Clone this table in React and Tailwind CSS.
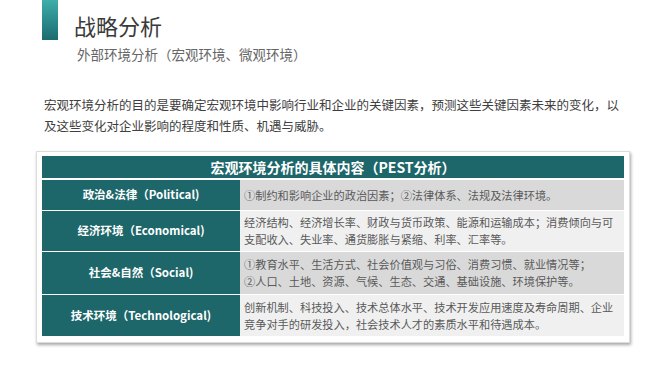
const rows = [
  {
    label: "政治&法律（Political)",
    lines: ["①制约和影响企业的政治因素；②法律体系、法规及法律环境。"],
    h: "h-[30px]",
    bg: "bg-[#d9d9d9]",
  },
  {
    label: "经济环境（Economical)",
    lines: [
      "经济结构、经济增长率、财政与货币政策、能源和运输成本；消费倾向与可",
      "支配收入、失业率、通货膨胀与紧缩、利率、汇率等。",
    ],
    h: "h-[40px]",
    bg: "bg-[#f0f0f0]",
  },
  {
    label: "社会&自然（Social)",
    lines: [
      "①教育水平、生活方式、社会价值观与习俗、消费习惯、就业情况等；",
      "②人口、土地、资源、气候、生态、交通、基础设施、环境保护等。",
    ],
    h: "h-[42px]",
    bg: "bg-[#d9d9d9]",
  },
  {
    label: "技术环境（Technological)",
    lines: [
      "创新机制、科技投入、技术总体水平、技术开发应用速度及寿命周期、企业",
      "竞争对手的研发投入，社会技术人才的素质水平和待遇成本。",
    ],
    h: "h-[41px]",
    bg: "bg-[#f0f0f0]",
  },
];

const App = () => {
  return (
    <div
      className="w-[668px] h-[376px] bg-white overflow-hidden"
      style={{ fontFamily: '"Noto Sans CJK SC", "Noto Sans", sans-serif' }}
    >
      {/* 标题 */}
      <div className="flex items-start pl-[42px]">
        <div className="w-[16px] h-[40px] bg-gradient-to-b from-[#3eaeab] to-[#1c6b6f]"></div>
        <div className="ml-[16px] mt-[11px] text-[22px] leading-[28px] text-[#3a3a3a]">
          战略分析
        </div>
      </div>
      <div className="pl-[77px] mt-[5px] text-[13.5px] leading-[18px] text-[#666666]">
        外部环境分析（宏观环境、微观环境）
      </div>

      {/* 说明文字 */}
      <div className="pl-[44px] mt-[31px] text-[12.5px] leading-[21px] text-[#404040] whitespace-nowrap">
        宏观环境分析的目的是要确定宏观环境中影响行业和企业的关键因素，预测这些关键因素未来的变化，以
        <br />
        及这些变化对企业影响的程度和性质、机遇与威胁。
      </div>

      {/* 表格 */}
      <div className="ml-[36px] mt-[15px] w-[594px] bg-white border border-[#dcdcdc] shadow-[1px_2px_3px_rgba(0,0,0,0.35)] pl-[5px] pr-[5px] pt-[4px] pb-[6px]">
        <div className="flex flex-col gap-[1px]">
          <div className="h-[22px] mb-[1px] bg-[#1d6669] flex items-center justify-center text-white font-bold text-[14px]">
            宏观环境分析的具体内容（PEST分析）
          </div>
          {rows.map((row) => (
            <div key={row.label} className={`flex ${row.h}`}>
              <div className="w-[198px] bg-[#1d6669] flex items-center justify-center text-white font-bold text-[11.5px]">
                {row.label}
              </div>
              <div
                className={`flex-1 ${row.bg} flex flex-col justify-center pl-[4px] text-[11.2px] leading-[17px] text-[#595959] whitespace-nowrap`}
              >
                {row.lines.map((l) => (
                  <div key={l}>{l}</div>
                ))}
              </div>
            </div>
          ))}
        </div>
      </div>
    </div>
  );
};

export default App;
